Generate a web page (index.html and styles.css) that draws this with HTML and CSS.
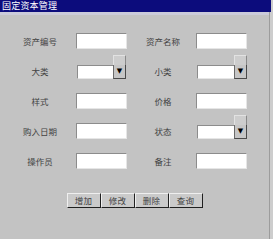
FILE: index.html
```html
<!doctype html>
<html lang="zh-CN">
<head>
    <meta charset="UTF-8">
    <title>固定资本管理</title>
    <link rel="stylesheet" href="styles.css">
</head>
<body>

    <div class='window'>

        <div class='titlebar'>固定资本管理</div>
        <div class='titlestrip'></div>

        <div class='form'>

            <div class='label'>资产编号</div>
            <div class='field'><div class='textbox'></div></div>
            <div class='label label2'>资产名称</div>
            <div class='field'><div class='textbox'></div></div>

            <div class='label'>大类</div>
            <div class='field'>
                <div class='combo'>
                    <div class='combotext'></div>
                    <div class='combobtn'>
                        <div class='combocap'></div>
                        <div class='comboarrow'>&#9660;</div>
                    </div>
                </div>
            </div>
            <div class='label label2'>小类</div>
            <div class='field'>
                <div class='combo combo2'>
                    <div class='combotext'></div>
                    <div class='combobtn'>
                        <div class='combocap'></div>
                        <div class='comboarrow'>&#9660;</div>
                    </div>
                </div>
            </div>

            <div class='label'>样式</div>
            <div class='field'><div class='textbox'></div></div>
            <div class='label label2'>价格</div>
            <div class='field'><div class='textbox'></div></div>

            <div class='label'>购入日期</div>
            <div class='field'><div class='textbox'></div></div>
            <div class='label label2'>状态</div>
            <div class='field'>
                <div class='combo combo2'>
                    <div class='combotext'></div>
                    <div class='combobtn'>
                        <div class='combocap'></div>
                        <div class='comboarrow'>&#9660;</div>
                    </div>
                </div>
            </div>

            <div class='label'>操作员</div>
            <div class='field'><div class='textbox'></div></div>
            <div class='label label2'>备注</div>
            <div class='field'><div class='textbox'></div></div>

        </div>

        <div class='buttons'>
            <div class='button'>增加</div>
            <div class='button'>修改</div>
            <div class='button'>删除</div>
            <div class='button'>查询</div>
        </div>

    </div>

</body>
</html>
```

FILE: styles.css
```css
body
{
    margin:           0px;
    background-color: #cdcdcd;
    font-family:      "Noto Sans CJK SC", "DejaVu Sans", sans-serif;
}

.window
{
    width:            269px;
    height:           239px;
    background-color: #c3c3c3;
    border-right:     1px solid #9c9c9c;
}

.titlebar
{
    width:            271px;
    height:           12px;
    background-color: #0c0c7c;
    color:            #ffffff;
    font-size:        9px;
    line-height:      12px;
    letter-spacing:   0.2px;
    padding-left:     2px;
    box-sizing:       border-box;
}

.titlestrip
{
    height:           3px;
    background-color: #cbcbda;
}

.form
{
    display:          grid;
    grid-template-columns: 76px 51px 69px 51px;
    grid-auto-rows:   30px;
    padding-top:      11px;
}

.label
{
    display:          flex;
    align-items:      center;
    justify-content:  center;
    padding-left:     4px;
    font-size:        8.5px;
    color:            #424242;
}

.label2
{
    padding-left:     3px;
}

.field
{
    display:          flex;
    align-items:      center;
}

.textbox
{
    width:            51px;
    height:           16px;
    box-sizing:       border-box;
    background-color: #ffffff;
    border-top:       1px solid #8c8c8c;
    border-left:      1px solid #8c8c8c;
    border-bottom:    1px solid #e6e6e6;
    border-right:     1px solid #e6e6e6;
}

.combo
{
    display:          flex;
    align-items:      flex-end;
    width:            49px;
    height:           15px;
    margin-left:      1px;
    margin-top:       1px;
}

.combo2
{
    width:            50px;
}

.combotext
{
    flex:             1;
    height:           14px;
    box-sizing:       border-box;
    background-color: #ffffff;
    border-top:       1px solid #8c8c8c;
    border-left:      1px solid #8c8c8c;
    border-bottom:    1px solid #e6e6e6;
}

.combobtn
{
    width:            13px;
    height:           24px;
    flex-shrink:      0;
    display:          flex;
    flex-direction:   column;
}

.combocap
{
    height:           10px;
    box-sizing:       border-box;
    background-color: #cdcdcd;
    border-top:       1px solid #e2e2e2;
    border-left:      1px solid #e2e2e2;
    border-right:     1px solid #8a8a8a;
}

.comboarrow
{
    flex:             1;
    box-sizing:       border-box;
    background-color: #c6c6c6;
    border-left:      1px solid #6a6a6a;
    border-right:     1px solid #4a4a4a;
    border-bottom:    1px solid #4a4a4a;
    color:            #000000;
    font-family:      "DejaVu Sans", sans-serif;
    font-size:        7px;
    line-height:      13px;
    text-align:       center;
}

.buttons
{
    display:          flex;
    justify-content:  center;
    margin-top:       17px;
}

.button
{
    width:            34px;
    height:           15px;
    box-sizing:       border-box;
    background-color: #cacaca;
    border-top:       1px solid #efefef;
    border-left:      1px solid #efefef;
    border-bottom:    1px solid #202020;
    border-right:     1px solid #202020;
    color:            #424242;
    font-size:        8.5px;
    line-height:      13px;
    letter-spacing:   0.3px;
    text-align:       center;
}
```
